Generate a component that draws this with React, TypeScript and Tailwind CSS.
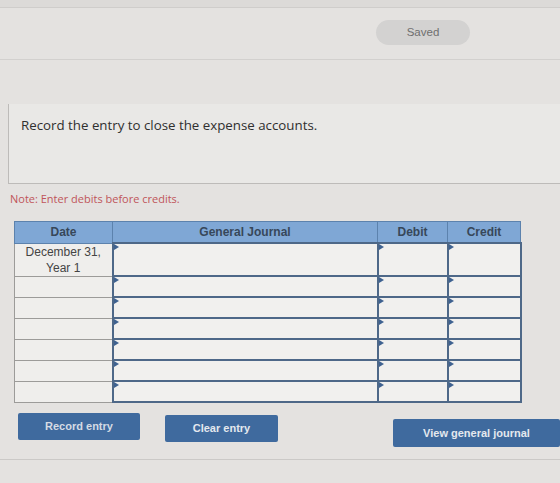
import React from "react";

const cols = [
  { label: "Date", w: "w-[98px]" },
  { label: "General Journal", w: "w-[265px]" },
  { label: "Debit", w: "w-[70px]" },
  { label: "Credit", w: "w-[73px]" },
];

function Marker() {
  return (
    <span className="absolute left-0 top-0 h-0 w-0 border-t-[3px] border-b-[3px] border-l-[5px] border-t-transparent border-b-transparent border-l-[#3f6290]" />
  );
}

function InputCell({ w }: { w: string }) {
  return (
    <td className={`${w} relative border-2 border-[#4e6888] bg-[#f1f0ee] p-0`}>
      <Marker />
    </td>
  );
}

export default function App() {
  const rows = [0, 1, 2, 3, 4, 5, 6];
  return (
    <div
      className="relative h-[483px] w-[560px] overflow-hidden bg-[#e4e2e0] text-[#333]"
      style={{ fontFamily: '"Liberation Sans", Arial, sans-serif' }}
    >
      {/* top strip */}
      <div className="h-[8px] border-b border-[#cfcdcb] bg-[#dcdad8]" />

      {/* status bar */}
      <div className="flex h-[52px] justify-end border-b border-[#d2d0ce] pr-[90px] pt-[12px]">
        <div className="flex h-[25px] w-[94px] items-center justify-center rounded-full bg-[#d3d2d1] text-[11.5px] text-[#6f6f6f]">
          Saved
        </div>
      </div>

      <div className="h-[44px]" />

      {/* question */}
      <div
        className="ml-[8px] h-[80px] border-b border-l border-[#bdbbb9] bg-[#e9e8e6] pl-[12px] pt-[12px] text-[13.3px] text-[#2f2f2f]"
        style={{ fontFamily: '"Open Sans", "Noto Sans", sans-serif' }}
      >
        Record the entry to close the expense accounts.
      </div>

      {/* note */}
      <div
        className="mt-[7px] pl-[10px] text-[11px] text-[#c0555a]"
        style={{ fontFamily: '"Open Sans", "Noto Sans", sans-serif' }}
      >
        Note: Enter debits before credits.
      </div>

      {/* journal table */}
      <div className="mt-[13px] pl-[14px]">
        <table className="border-collapse">
          <thead>
            <tr className="h-[22px]">
              {cols.map((c) => (
                <th
                  key={c.label}
                  className={`${c.w} border border-[#5c82ad] bg-[#7fa7d5] p-0 text-[12px] font-bold text-[#37475a]`}
                >
                  {c.label}
                </th>
              ))}
            </tr>
          </thead>
          <tbody>
            {rows.map((r) => (
              <tr key={r} className={r === 0 ? "h-[32px]" : "h-[21px]"}>
                <td className="w-[98px] border border-[#9c9b99] bg-[#efeeec] p-0 text-center align-top text-[12px] leading-[16px] text-[#444]">
                  {r === 0 ? (
                    <>
                      December 31,
                      <br />
                      Year 1
                    </>
                  ) : null}
                </td>
                <InputCell w="w-[265px]" />
                <InputCell w="w-[70px]" />
                <InputCell w="w-[73px]" />
              </tr>
            ))}
          </tbody>
        </table>
      </div>

      {/* actions */}
      <div className="mt-[10px] flex items-start pl-[18px]">
        <button className="flex h-[27px] w-[122px] items-center justify-center rounded-[2px] bg-[#3f6a9e] text-[11px] font-bold text-[#d5dbe4]">
          Record entry
        </button>
        <button className="ml-[25px] mt-[2px] flex h-[27px] w-[113px] items-center justify-center rounded-[2px] bg-[#3f6a9e] text-[11px] font-bold text-[#e4e8ee]">
          Clear entry
        </button>
        <button className="ml-auto mt-[6px] flex h-[28px] w-[167px] items-center justify-center rounded-[2px] bg-[#3f6a9e] text-[11px] font-bold text-[#e4e8ee]">
          View general journal
        </button>
      </div>

      <div className="mt-[12px] border-b border-[#cbc9c7]" />
    </div>
  );
}
